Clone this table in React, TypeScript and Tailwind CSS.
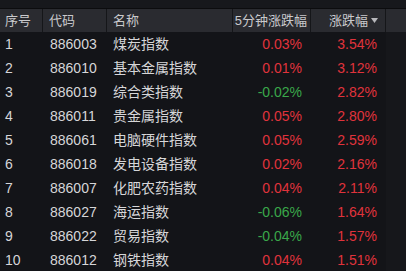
import React from 'react';

type Row = { code: string; name: string; m5: string; pct: string };

const rows: Row[] = [
  { code: '886003', name: '煤炭指数', m5: '0.03%', pct: '3.54%' },
  { code: '886010', name: '基本金属指数', m5: '0.01%', pct: '3.12%' },
  { code: '886019', name: '综合类指数', m5: '-0.02%', pct: '2.82%' },
  { code: '886011', name: '贵金属指数', m5: '0.05%', pct: '2.80%' },
  { code: '886061', name: '电脑硬件指数', m5: '0.05%', pct: '2.59%' },
  { code: '886018', name: '发电设备指数', m5: '0.02%', pct: '2.16%' },
  { code: '886007', name: '化肥农药指数', m5: '0.04%', pct: '2.11%' },
  { code: '886027', name: '海运指数', m5: '-0.06%', pct: '1.64%' },
  { code: '886022', name: '贸易指数', m5: '-0.04%', pct: '1.57%' },
  { code: '886012', name: '钢铁指数', m5: '0.04%', pct: '1.51%' },
];

const cols = 'grid grid-cols-[43px_64px_126px_78px_75px_20px]';
const font = { fontFamily: '"Liberation Sans", "Noto Sans CJK SC", sans-serif' };

export default function App() {
  return (
    <div className="w-[406px] h-[271px] overflow-hidden bg-[#131418] text-[14px]" style={font}>
      {/* top strip, cut off in the screenshot */}
      <div className="h-[9px] bg-[#17181c] border-b border-[#0c0c0e]" />

      {/* header */}
      <div className={`${cols} h-[23px] bg-[#2a2b30] text-[13px] text-[#c9c9cc] items-center`}>
        <div className="h-full flex items-center pl-[5px] border-r border-[#151619]">序号</div>
        <div className="h-full flex items-center pl-[6px] border-r border-[#151619]">代码</div>
        <div className="h-full flex items-center pl-[6px] border-r border-[#151619]">名称</div>
        <div className="h-full flex items-center justify-end pr-[3px] border-r border-[#151619]">5分钟涨跌幅</div>
        <div className="h-full flex items-center justify-end pr-[7px] gap-[3px] border-r border-[#151619]">
          <span>涨跌幅</span>
          <svg width="7" height="5" viewBox="0 0 7 5">
            <path d="M0 0 L7 0 L3.5 5 Z" fill="#b8b8bc" />
          </svg>
        </div>
        <div />
      </div>

      {/* body */}
      <div className="flex flex-col">
        {rows.map((r, i) => (
          <div key={r.code} className={`${cols} h-[24px] items-center text-[#d6d6d8]`}>
            <div className="pl-[5px]">{i + 1}</div>
            <div className="pl-[7px]">{r.code}</div>
            <div className="pl-[6px]">{r.name}</div>
            <div className={`text-right pr-[9px] ${r.m5.startsWith('-') ? 'text-[#3aa74a]' : 'text-[#e0333c]'}`}>
              {r.m5}
            </div>
            <div className="text-right pr-[9px] text-[#e0333c]">{r.pct}</div>
            <div className="h-full bg-[#16171b]" />
          </div>
        ))}
      </div>
    </div>
  );
}
